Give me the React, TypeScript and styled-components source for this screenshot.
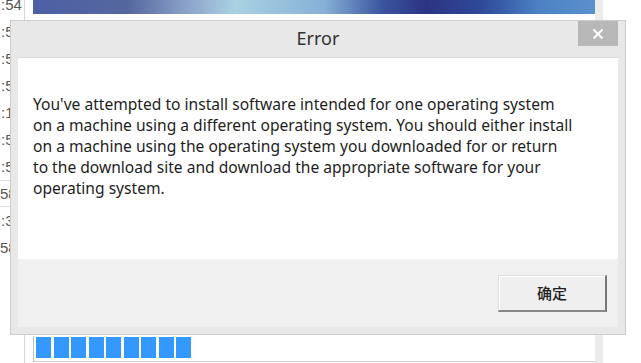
import React from "react";
import styled, { createGlobalStyle } from "styled-components";

const GlobalStyle = createGlobalStyle`
  html, body {
    margin: 0;
    padding: 0;
    background: #ffffff;
  }
  body {
    font-family: "Noto Sans", "Liberation Sans", sans-serif;
  }
`;

const Desktop = styled.div`
  position: relative;
  width: 641px;
  height: 363px;
  overflow: hidden;
  background: #ffffff;
`;

/* window sitting behind the dialog */
const BackWindow = styled.div`
  display: flex;
  width: 603px;
  height: 363px;
`;

const TimeColumn = styled.div`
  display: flex;
  flex-direction: column;
  width: 24px;
  margin-top: -9px;
  border-right: 1px solid #d6d6d6;
  overflow: hidden;
`;

const TimeRow = styled.div<{ $selected?: boolean; $shift: number }>`
  height: 27px;
  flex: none;
  display: flex;
  align-items: center;
  padding-left: ${(p) => p.$shift}px;
  font-family: "Liberation Sans", sans-serif;
  font-size: 15px;
  color: #555555;
  white-space: nowrap;
  box-sizing: border-box;
  border-top: 1px solid ${(p) => (p.$selected ? "#e2e2e2" : "transparent")};
  border-bottom: 1px solid ${(p) => (p.$selected ? "#e2e2e2" : "transparent")};
`;

const MainArea = styled.div`
  flex: 1;
  display: flex;
  flex-direction: column;
  margin-left: 8px;
`;

const Banner = styled.div`
  height: 14px;
  background: linear-gradient(
    90deg,
    #4d5fa6 0%,
    #56679f 17%,
    #8ea6cc 28%,
    #a9d2e2 36%,
    #86b0d6 52%,
    #3b55a0 62%,
    #2b3482 70%,
    #2f4a9a 80%,
    #4a82c4 90%,
    #5a90cc 100%
  );
`;

const MainBody = styled.div`
  flex: 1;
`;

const Progress = styled.div`
  display: flex;
  gap: 2.5px;
  height: 26px;
  padding: 1px 2px;
  margin-bottom: 1px;
  border-left: 1px solid #c4c4c4;
  border-bottom: 1px solid #d0d0d0;
  box-sizing: border-box;
`;

const ProgressBlock = styled.div`
  width: 15px;
  height: 21px;
  background: #3399ff;
`;

const RightFrame = styled.div`
  width: 8px;
  background: #ececec;
`;

/* the error dialog */
const Dialog = styled.div`
  position: absolute;
  left: 10px;
  top: 20px;
  width: 616px;
  height: 315px;
  box-sizing: border-box;
  display: flex;
  flex-direction: column;
  padding: 0 7px 7px 7px;
  background: #e8e8e8;
  border: 1px solid #cdcdcd;
`;

const TitleBar = styled.div`
  display: grid;
  grid-template-columns: 1fr auto 1fr;
  height: 36px;
  flex: none;
`;

const Title = styled.div`
  grid-column: 2;
  align-self: center;
  font-family: "Noto Sans", sans-serif;
  font-size: 18px;
  color: #333333;
  padding-bottom: 3px;
`;

const CloseButton = styled.div`
  grid-column: 3;
  justify-self: end;
  align-self: start;
  width: 40px;
  height: 25px;
  display: flex;
  align-items: center;
  justify-content: center;
  background: #b8b8b8;
`;

const Content = styled.div`
  flex: 1;
  display: flex;
  flex-direction: column;
  background: #ffffff;
  border-top: 1px solid #dadada;
`;

const Message = styled.div`
  flex: 1;
  padding: 36px 15px 0 15px;
  font-family: "Noto Sans", sans-serif;
  font-size: 15.6px;
  line-height: 21px;
  color: #1e1e1e;
`;

const Line = styled.div`
  white-space: nowrap;
`;

const Footer = styled.div`
  height: 68px;
  flex: none;
  display: flex;
  align-items: center;
  justify-content: flex-end;
  padding-right: 11px;
  background: #f0f0f0;
`;

const Button = styled.button`
  width: 109px;
  height: 37px;
  box-sizing: border-box;
  background: #efefef;
  border-style: solid;
  border-width: 1px 2px 2px 1px;
  border-color: #dedede #777777 #888888 #dedede;
  box-shadow: inset 1px 1px 0 #ffffff;
  font-family: "Noto Sans CJK SC", sans-serif;
  font-size: 15px;
  font-weight: 500;
  color: #222222;
  padding: 0;
`;

const times = [
  { t: ":54", shift: 1 },
  { t: ":55", shift: 1 },
  { t: ":55", shift: 1 },
  { t: ":55", shift: 1 },
  { t: ":12", shift: 1 },
  { t: ":55", shift: 1 },
  { t: ":55", shift: 1 },
  { t: "58", shift: -3, selected: true },
  { t: ":33", shift: 1 },
  { t: "58", shift: -3 },
];

const lines = [
  "You've attempted to install software intended for one operating system",
  "on a machine using a different operating system. You should either install",
  "on a machine using the operating system you downloaded for or return",
  "to the download site and download the appropriate software for your",
  "operating system.",
];

const App: React.FC = () => {
  return (
    <Desktop>
      <GlobalStyle />
      <BackWindow>
        <TimeColumn>
          {times.map((row, i) => (
            <TimeRow key={i} $shift={row.shift} $selected={row.selected}>
              {row.t}
            </TimeRow>
          ))}
        </TimeColumn>
        <MainArea>
          <Banner />
          <MainBody />
          <Progress>
            {Array.from({ length: 9 }).map((_, i) => (
              <ProgressBlock key={i} />
            ))}
          </Progress>
        </MainArea>
        <RightFrame />
      </BackWindow>

      <Dialog>
        <TitleBar>
          <Title>Error</Title>
          <CloseButton>
            <svg width="12" height="12" viewBox="0 0 12 12">
              <path d="M1.5 1.5 L10.5 10.5 M10.5 1.5 L1.5 10.5" stroke="#ffffff" strokeWidth="2" />
            </svg>
          </CloseButton>
        </TitleBar>
        <Content>
          <Message>
            {lines.map((l, i) => (
              <Line key={i}>{l}</Line>
            ))}
          </Message>
          <Footer>
            <Button>确定</Button>
          </Footer>
        </Content>
      </Dialog>
    </Desktop>
  );
};

export default App;
